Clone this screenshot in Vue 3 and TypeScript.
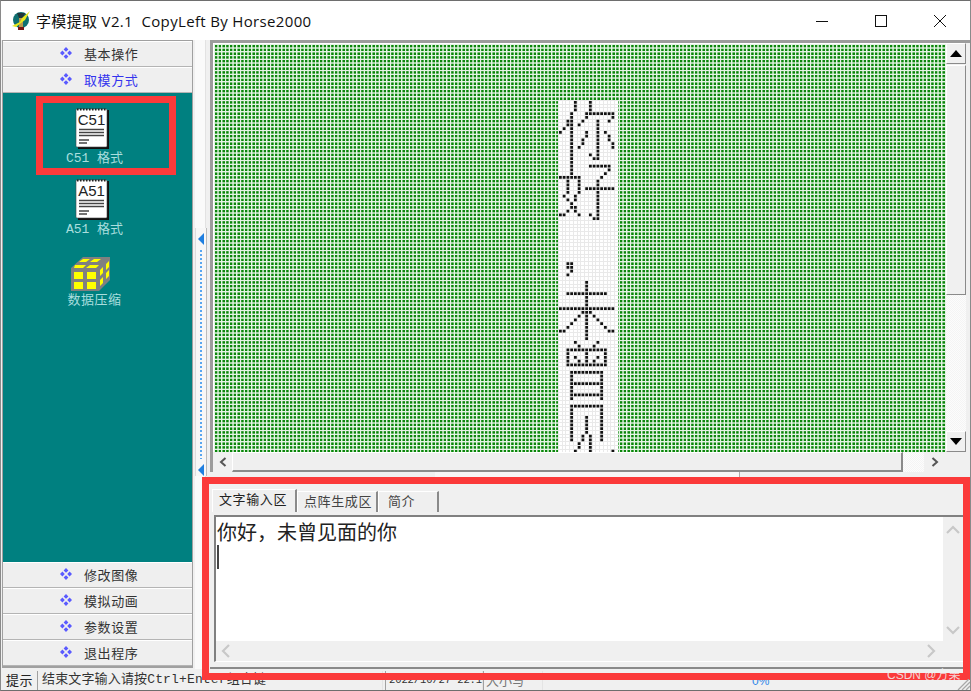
<template>
  <div class="window">
    <header class="titlebar">
      <svg class="app-icon" width="22" height="22" viewBox="0 0 22 22">
        <circle cx="11" cy="10" r="8" fill="#0f6f70" />
        <path d="M7 3h8l-2 5h-4z" fill="#20363a" />
        <path d="M9 8h4v9H9z" fill="#b9964a" />
        <path d="M2 16l8-4 2-4 8-7-5 9-4 3-5 4z" fill="#e8e81c" />
        <path d="M8 17h6v3H8z" fill="#7a1414" />
      </svg>
      <span class="title">字模提取 V2.1&nbsp; CopyLeft By Horse2000</span>
      <div class="controls">
        <svg width="14" height="14" viewBox="0 0 14 14"><path d="M1 7.500h12" stroke="#111" fill="none" /></svg>
        <svg width="14" height="14" viewBox="0 0 14 14"><rect x="1.500" y="1.500" width="11" height="11" stroke="#111" fill="none" /></svg>
        <svg width="14" height="14" viewBox="0 0 14 14"><path d="M1 1l12 12M13 1L1 13" stroke="#111" fill="none" /></svg>
      </div>
    </header>

    <div class="body">
      <aside class="sidebar">
        <div v-for="item in topMenu" :key="item.label" class="menu-btn" :class="{ active: item.active }">
          <svg class="gem" width="12" height="12" viewBox="0 0 14 14">
            <path d="M7 0l2.800 2.800L7 5.600 4.200 2.800zM7 8.400l2.800 2.800L7 14l-2.800-2.800zM2.800 4.200L5.600 7 2.800 9.800 0 7zM11.200 4.200L14 7l-2.800 2.800L8.400 7z" fill="#5a5aff" />
          </svg>
          <span>{{ item.label }}</span>
        </div>

        <div class="tool-pane">
          <div v-for="tool in tools" :key="tool.name" class="tool">
            <svg class="note" width="34" height="41" viewBox="0 0 34 41">
              <rect x="3" y="2" width="31" height="39" fill="#111" />
              <rect x="1" y="1" width="31" height="38" rx="1" fill="#fff" stroke="#444" stroke-width=".6" />
              <path d="M2 1.500h29" stroke="#222" stroke-width="2" stroke-dasharray="1.500 1.500" />
              <text x="16.500" y="17" text-anchor="middle" class="note-text">{{ tool.name }}</text>
              <path d="M4 21.500h25M4 24.500h25M4 27.500h25" stroke="#444" stroke-width="1.300" />
              <path d="M4 32h10M4 35h8" stroke="#444" stroke-width="1.300" />
            </svg>
            <span class="tool-label">{{ tool.name }}  格式</span>
          </div>

          <div class="tool cube-tool">
            <svg width="40" height="34" viewBox="0 0 40 34">
              <path d="M0 11L12 0h27v23L28 34H0z" fill="#808080" />
              <path d="M12 2h7l-4 3H8zM23 2h7l-4 3h-7zM4 8h11l-3 3H3zM19 8h9l-3 3H15z" fill="#ffff00" />
              <path d="M3 15h9v7H3zM16 15h9v7h-9zM3 25h9v7H3zM16 25h9v7h-9z" fill="#ffff00" />
              <path d="M29 13l3-3v6l-3 3zM35 7l3-3v6l-3 3zM29 23l3-3v6l-3 3zM35 16l3-3v6l-3 3z" fill="#ffff00" />
            </svg>
            <span class="tool-label cube-label">数据压缩</span>
          </div>
        </div>

        <div v-for="item in bottomMenu" :key="item" class="menu-btn">
          <svg class="gem" width="12" height="12" viewBox="0 0 14 14">
            <path d="M7 0l2.800 2.800L7 5.600 4.200 2.800zM7 8.400l2.800 2.800L7 14l-2.800-2.800zM2.800 4.200L5.600 7 2.800 9.800 0 7zM11.200 4.200L14 7l-2.800 2.800L8.400 7z" fill="#5a5aff" />
          </svg>
          <span>{{ item }}</span>
        </div>
      </aside>

      <div class="vsplit">
        <div class="vsplit-handle">
          <svg width="6" height="12" viewBox="0 0 6 12"><path d="M6 0v12L0 6z" fill="#1f7fe0" /></svg>
          <div class="vsplit-dots"></div>
          <svg width="6" height="12" viewBox="0 0 6 12"><path d="M6 0v12L0 6z" fill="#1f7fe0" /></svg>
        </div>
      </div>

      <main class="main">
        <section class="viewer">
          <div class="matrix">
            <svg class="strip" width="60" height="352">
              <rect v-for="d in dots" :key="d.key" :x="d.x" :y="d.y" width="2.75" height="2.75" fill="#111" />
            </svg>
          </div>
          <div class="vbar">
            <div class="sbtn"><svg width="12" height="7" viewBox="0 0 12 7"><path d="M6 0l6 7H0z" fill="#000" /></svg></div>
            <div class="vthumb"></div>
            <div class="dither"></div>
            <div class="sbtn"><svg width="12" height="7" viewBox="0 0 12 7"><path d="M0 0h12L6 7z" fill="#000" /></svg></div>
          </div>
          <div class="hbar">
            <div class="hend"><svg width="8" height="10" viewBox="0 0 8 10"><path d="M6.500 1L2 5l4.500 4" fill="none" stroke="#555" stroke-width="2" /></svg></div>
            <div class="hthumb"></div>
            <div class="dither hdither"></div>
            <div class="hend hend-right"><svg width="8" height="10" viewBox="0 0 8 10"><path d="M1.500 1L6 5 1.500 9" fill="none" stroke="#555" stroke-width="2" /></svg></div>
          </div>
        </section>

        <div class="hsplit"><div class="hsplit-handle"></div></div>

        <section class="input-area">
          <div class="tabs">
            <div v-for="(tab, i) in tabs" :key="tab.label" class="tab" :class="[tab.cls, { current: i === 0 }]">{{ tab.label }}</div>
          </div>
          <div class="editor">
            <div class="editor-text">
              <div class="line">你好，未曾见面的你</div>
              <div class="caret"></div>
            </div>
            <div class="edit-vbar">
              <svg width="14" height="9" viewBox="0 0 14 9"><path d="M1 8l6-6 6 6" fill="none" stroke="#c8c8c8" stroke-width="2.200" /></svg>
              <svg width="14" height="9" viewBox="0 0 14 9"><path d="M1 1l6 6 6-6" fill="none" stroke="#c8c8c8" stroke-width="2.200" /></svg>
            </div>
            <div class="edit-hbar">
              <svg width="9" height="14" viewBox="0 0 9 14"><path d="M8 1L2 7l6 6" fill="none" stroke="#c8c8c8" stroke-width="2.200" /></svg>
              <svg width="9" height="14" viewBox="0 0 9 14"><path d="M1 1l6 6-6 6" fill="none" stroke="#c8c8c8" stroke-width="2.200" /></svg>
            </div>
            <div class="edit-corner"></div>
          </div>
        </section>
      </main>
    </div>

    <footer class="status">
      <span class="hint-label">提示</span>
      <span class="field msg">结束文字输入请按Ctrl+Enter组合键</span>
      <span class="field time">2022/10/27 22:1</span>
      <span class="field caps">大小写</span>
      <span class="percent">0%</span>
    </footer>

    <div class="mark mark-tool"></div>
    <div class="mark mark-input"></div>
    <div class="watermark">CSDN @方栗</div>
    <svg class="grip" width="14" height="11" viewBox="0 0 14 11">
      <path d="M2 11L13 0M6 11L14 3M10 11l4-4" stroke="#a8a8a8" stroke-width="1.300" fill="none" />
    </svg>
  </div>
</template>

<script setup lang="ts">
import { computed } from 'vue';

const topMenu = [
  { label: '基本操作', active: false },
  { label: '取模方式', active: true }
];
const bottomMenu = ['修改图像', '模拟动画', '参数设置', '退出程序'];
const tools = [{ name: 'C51' }, { name: 'A51' }];

const tabs = [
  { label: '文字输入区', cls: 'tab-a' },
  { label: '点阵生成区', cls: 'tab-b' },
  { label: '简介', cls: 'tab-c' }
];

// row -> lit columns of the dot matrix, 'a-b' is a run
const bitmap: Record<number, string> = {
  0: '4 8', 1: '4 8', 2: '4 8', 3: '3 7-14', 4: '3 7 14', 5: '2 3 6 10 13', 6: '2 3 5 10', 7: '1 3 10',
  8: '0 3 7 10 12', 9: '3 7 10 13', 10: '3 6 10 13', 11: '3 6 10 14', 12: '3 5 10 14', 13: '3 10', 14: '3 8 10', 15: '3 9 10',
  16: '3', 17: '3 8-13', 18: '3 13', 19: '3 12', 20: '0-5 11', 21: '2 5 10', 22: '2 5 10', 23: '2 5 7-14',
  24: '2 5 10', 25: '1 4 10', 26: '2 4 10', 27: '3 10', 28: '3 4 10', 29: '2 4 10', 30: '0 1 5 8 10', 31: '9 10',
  43: '2 3', 44: '2 3', 45: '3', 46: '2',
  48: '7', 49: '7', 50: '7', 51: '2-12', 52: '7', 53: '7', 54: '7', 55: '0-14', 56: '6 7 8', 57: '5 7 9',
  58: '4 7 10', 59: '3 7 11', 60: '2 7 12', 61: '0 1 7 13 14', 62: '7', 63: '7',
  64: '4 10', 65: '5 9', 66: '2-12', 67: '2 7 12', 68: '2 4 7 10 12', 69: '2 5 7 9 12', 70: '2-12',
  72: '3-11', 73: '3 11', 74: '3 11', 75: '3-11', 76: '3 11', 77: '3 11', 78: '3-11', 79: '3 11',
  81: '3-11', 82: '3 11', 83: '3 11', 84: '3 7 11', 85: '3 7 11', 86: '3 7 11', 87: '3 7 11', 88: '3 7 11',
  89: '3 6 8 11', 90: '3 6 8 11', 91: '5 8', 92: '5 8', 93: '4 8 14'
};

const CELL = 3.75;

const dots = computed(() => {
  const out: { key: string; x: number; y: number }[] = [];
  for (const [row, spec] of Object.entries(bitmap)) {
    for (const part of spec.split(' ')) {
      const [from, to] = part.split('-').map(Number);
      for (let c = from; c <= (to ?? from); c++) {
        out.push({ key: row + '_' + c, x: c * CELL + 1, y: Number(row) * CELL + 1 });
      }
    }
  }
  return out;
});
</script>

<style scoped>
.window {
  position: relative;
  width: 971px;
  height: 691px;
  box-sizing: border-box;
  overflow: hidden;
  display: flex;
  flex-direction: column;
  background: #f0f0f0;
  border-top: 1px solid #6e6e6e;
  border-left: 1px solid #8a8a8a;
  border-right: 1px solid #8a8a8a;
  border-bottom: 1px solid #6e6e6e;
  font-family: "Noto Sans CJK SC", "Liberation Sans", sans-serif;
  color: #222;
}

.titlebar {
  height: 39px;
  flex: none;
  display: flex;
  align-items: center;
  background: #fff;
  padding-left: 9px;
}

.app-icon {
  margin-right: 4px;
}

.title {
  font-family: "Open Sans", "Noto Sans CJK SC", sans-serif;
  font-size: 15px;
  letter-spacing: 0.34px;
  color: #111;
  white-space: pre;
}

.controls {
  margin-left: auto;
  display: flex;
  gap: 45px;
  padding-right: 23px;
}

.body {
  flex: 1;
  min-height: 0;
  display: flex;
}

.sidebar {
  width: 191px;
  flex: none;
  margin: 0 0 1px 1px;
  display: flex;
  flex-direction: column;
  border: 1px solid #a0a0a0;
  border-bottom-width: 2px;
  box-sizing: border-box;
}

.menu-btn {
  height: 26px;
  flex: none;
  box-sizing: border-box;
  display: flex;
  align-items: center;
  background: #efefef;
  border-top: 1px solid #fff;
  border-bottom: 1px solid #b4b4b4;
  padding: 0 0 2px 57px;
  font-size: 13px;
  letter-spacing: 0.6px;
  color: #333;
}

.menu-btn.active {
  color: #3434ee;
}

.gem {
  margin-right: 12px;
}

.tool-pane {
  flex: 1;
  background: #008080;
  padding: 15px 6px 0 0;
  display: flex;
  flex-direction: column;
  align-items: center;
}

.tool {
  height: 71px;
  display: flex;
  flex-direction: column;
  align-items: center;
}

.tool svg {
  margin-right: 6px;
}

.cube-tool {
  margin-top: 7px;
}

.note-text {
  font-family: "Liberation Sans", sans-serif;
  font-size: 15px;
  fill: #222;
}

.tool-label {
  margin-top: 2px;
  font-family: "Liberation Mono", "Noto Sans CJK SC", monospace;
  font-size: 13px;
  line-height: 16px;
  color: #a9dede;
  white-space: pre;
}

.cube-label {
  letter-spacing: 0.5px;
}

.vsplit {
  width: 17px;
  flex: none;
  padding: 188px 3px 0 2px;
  box-sizing: border-box;
  background: linear-gradient(90deg, #f0f0f0 0 2px, #fafafa 2px 12px, #e2e2e2 12px 13px, #f0f0f0 13px);
}

.vsplit-handle {
  height: 243px;
  background: #f7f7f7;
  border-left: 1px solid #dcdcdc;
  border-right: 1px solid #bbb;
  display: flex;
  flex-direction: column;
  align-items: center;
  padding-top: 5px;
}

.vsplit-dots {
  flex: 1;
  width: 2px;
  margin: 5px 0;
  background: repeating-linear-gradient(180deg, #58a6f0 0 2px, transparent 2px 4px);
}

.main {
  flex: 1;
  min-width: 0;
  display: flex;
  flex-direction: column;
}

.viewer {
  flex: none;
  display: grid;
  grid-template-columns: 733px 20px;
  grid-template-rows: 409px 20px;
  border-top: 3px solid #9c9c9c;
  border-left: 3px solid #9c9c9c;
}

/* soft edges on the lines keep the 3.75px grid from beating against the pixels */
.matrix {
  overflow: hidden;
  padding: 56px 0 0 344px;
  box-sizing: border-box;
  border-top: 1px solid #fff;
  border-left: 1px solid #fff;
  background:
    repeating-linear-gradient(90deg, #e6f4e6 0, #e6f4e6 0.5px, rgba(230, 244, 230, 0) 1.4px, rgba(230, 244, 230, 0) 3px, #e6f4e6 3.75px),
    repeating-linear-gradient(180deg, #e6f4e6 0, #e6f4e6 0.5px, rgba(230, 244, 230, 0) 1.4px, rgba(230, 244, 230, 0) 3px, #e6f4e6 3.75px),
    #0a860a;
}

.strip {
  display: block;
  background:
    repeating-linear-gradient(90deg, #e9e9e9 0 1px, transparent 1px 3.75px),
    repeating-linear-gradient(180deg, #e9e9e9 0 1px, transparent 1px 3.75px),
    #fff;
}

.vbar {
  display: flex;
  flex-direction: column;
}

.sbtn {
  height: 19px;
  flex: none;
  display: flex;
  align-items: center;
  justify-content: center;
  background: #f0f0f0;
  border-top: 1px solid #fff;
  border-left: 1px solid #fff;
  border-right: 1px solid #8a8a8a;
  border-bottom: 1px solid #8a8a8a;
}

.vthumb {
  height: 228px;
  flex: none;
  margin-top: 1px;
  background: #f0f0f0;
  border-top: 1px solid #fff;
  border-left: 1px solid #fff;
  border-right: 1px solid #8a8a8a;
  border-bottom: 1px solid #8a8a8a;
}

.dither {
  flex: 1;
  background: repeating-conic-gradient(#f4f4f4 0 25%, #fcfcfc 0 50%) 0 0 / 2px 2px;
}

.hbar {
  grid-column: 1 / 3;
  display: flex;
  align-items: stretch;
}

.hend {
  width: 19px;
  flex: none;
  display: flex;
  align-items: center;
  justify-content: center;
}

.hend-right {
  width: 21px;
}

.hthumb {
  width: 671px;
  flex: none;
  box-sizing: border-box;
  background: #efefef;
  border-top: 1px solid #fff;
  border-left: 1px solid #fff;
  border-right: 2px solid #8a8a8a;
  border-bottom: 2px solid #8a8a8a;
}

.hdither {
  width: 21px;
  flex: none;
}

.hsplit {
  height: 11px;
  flex: none;
  padding-left: 225px;
}

.hsplit-handle {
  width: 305px;
  height: 11px;
  box-sizing: border-box;
  background: #f7f7f7;
  border-right: 1px solid #aaa;
  border-bottom: 1px solid #aaa;
}

.input-area {
  flex: 1;
  min-height: 0;
  display: flex;
  flex-direction: column;
  padding-top: 6px;
  padding-left: 2px;
  border-bottom: 2px solid #8a8a8a;
}

.tabs {
  display: flex;
  align-items: flex-end;
  height: 23px;
  flex: none;
}

.tab {
  height: 21px;
  box-sizing: border-box;
  background: #efefef;
  border-left: 1px solid #fff;
  border-top: 1px solid #fff;
  border-right: 2px solid #8a8a8a;
  font-size: 13px;
  line-height: 17px;
  color: #444;
  padding-left: 6px;
  letter-spacing: 0.6px;
  white-space: nowrap;
}

.tab.current {
  height: 23px;
  line-height: 18px;
  color: #222;
}

.tab-a {
  width: 85px;
}

.tab-b {
  width: 81px;
}

.tab-c {
  width: 61px;
  padding-left: 9px;
}

.editor {
  margin-top: 3px;
  margin-left: 2px;
  width: 749px;
  display: grid;
  grid-template-columns: 727px 20px;
  grid-template-rows: 124px 20px;
  border-top: 2px solid #808080;
  border-left: 2px solid #808080;
  border-bottom: 1px solid #fff;
}

.editor-text {
  background: #fff;
  padding: 2px 0 0 1px;
}

.line {
  font-size: 20px;
  line-height: 26px;
  color: #222;
}

.caret {
  width: 2px;
  height: 24px;
  background: #444;
}

.edit-vbar {
  display: flex;
  flex-direction: column;
  justify-content: space-between;
  align-items: center;
  padding: 8px 0 6px;
}

.edit-hbar {
  display: flex;
  justify-content: space-between;
  align-items: center;
  padding: 0 7px 0 5px;
}

.status {
  height: 21px;
  flex: none;
  display: flex;
  align-items: flex-end;
  font-size: 13px;
  line-height: 18px;
  position: relative;
}

.hint-label {
  width: 36px;
  padding: 0 0 1px 5px;
  box-sizing: border-box;
  color: #222;
  letter-spacing: 0.5px;
}

.field {
  display: block;
  height: 19px;
  box-sizing: border-box;
  border-left: 1px solid #a0a0a0;
  border-right: 1px solid #e4e4e4;
  white-space: nowrap;
  color: #333;
}

.msg {
  width: 346px;
  padding-left: 4px;
  font-family: "Liberation Mono", "Noto Sans CJK SC", monospace;
  font-size: 13px;
  letter-spacing: 0.15px;
}

.time {
  width: 98px;
  margin-left: 2px;
  padding-left: 3px;
  font-family: "Liberation Mono", "Noto Sans CJK SC", monospace;
  font-size: 10.5px;
  letter-spacing: -0.1px;
}

.caps {
  width: 60px;
  color: #777;
  padding-left: 2px;
}

.percent {
  margin-left: 209px;
  color: #2f86e8;
  font-family: "Liberation Sans", sans-serif;
  font-size: 12px;
}

.mark {
  position: absolute;
  box-sizing: border-box;
  border: 7px solid #fb3a3a;
  pointer-events: none;
}

.mark-tool {
  left: 35px;
  top: 95px;
  width: 140px;
  height: 79px;
}

.mark-input {
  left: 201px;
  top: 476px;
  width: 768px;
  height: 203px;
}

.watermark {
  position: absolute;
  left: 886px;
  top: 666px;
  font-family: "Liberation Sans", "Noto Sans CJK SC", sans-serif;
  font-size: 12px;
  line-height: 16px;
  color: rgba(240, 240, 240, 0.85);
  white-space: nowrap;
}

.grip {
  position: absolute;
  right: 0;
  bottom: 0;
}
</style>

<style>
body {
  margin: 0;
  background: #f0f0f0;
}
</style>
